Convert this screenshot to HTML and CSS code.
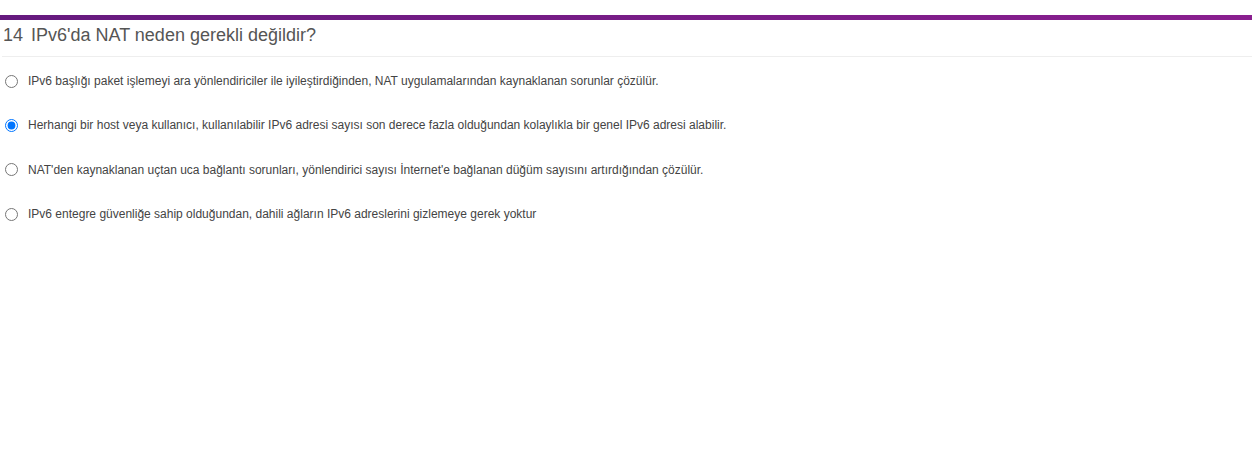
FILE: index.html
```html
<!DOCTYPE html>
<html lang="tr">
<head>
<meta charset="utf-8">
<link rel="stylesheet" href="styles.css">
</head>
<body>
<div class="page">
  <div class="topbar"></div>
  <div class="question">
    <h2 class="title"><span class="num">14</span>IPv6'da NAT neden gerekli değildir?</h2>
    <div class="options">
      <label class="option"><input type="radio" name="q14"><span>IPv6 başlığı paket işlemeyi ara yönlendiriciler ile iyileştirdiğinden, NAT uygulamalarından kaynaklanan sorunlar çözülür.</span></label>
      <label class="option"><input type="radio" name="q14" checked><span>Herhangi bir host veya kullanıcı, kullanılabilir IPv6 adresi sayısı son derece fazla olduğundan kolaylıkla bir genel IPv6 adresi alabilir.</span></label>
      <label class="option"><input type="radio" name="q14"><span>NAT'den kaynaklanan uçtan uca bağlantı sorunları, yönlendirici sayısı İnternet'e bağlanan düğüm sayısını artırdığından çözülür.</span></label>
      <label class="option"><input type="radio" name="q14"><span>IPv6 entegre güvenliğe sahip olduğundan, dahili ağların IPv6 adreslerini gizlemeye gerek yoktur</span></label>
    </div>
  </div>
</div>
</body>
</html>
```
FILE: styles.css
```css
html, body {
  margin: 0;
  padding: 0;
  background: #fff;
}
body {
  font-family: "Liberation Sans", Arial, sans-serif;
}
.page {
  padding-top: 15px;
}
.topbar {
  height: 5px;
  background: linear-gradient(to right, #651a7e, #8a1f8f);
}
.question {
  padding: 0 0 0 2px;
}
.title {
  margin: 0;
  padding: 2px 0 8px 1px;
  font-size: 18px;
  font-weight: normal;
  line-height: 26px;
  color: #555;
  border-bottom: 1px solid #eee;
}
.num {
  margin-right: 8px;
}
.options {
  display: flex;
  flex-direction: column;
  padding-top: 2px;
}
.option {
  display: flex;
  align-items: center;
  height: 44.3px;
  font-size: 12px;
  color: #444;
}
.option input {
  margin: 0 10px 0 3px;
  width: 13px;
  height: 13px;
}
```
